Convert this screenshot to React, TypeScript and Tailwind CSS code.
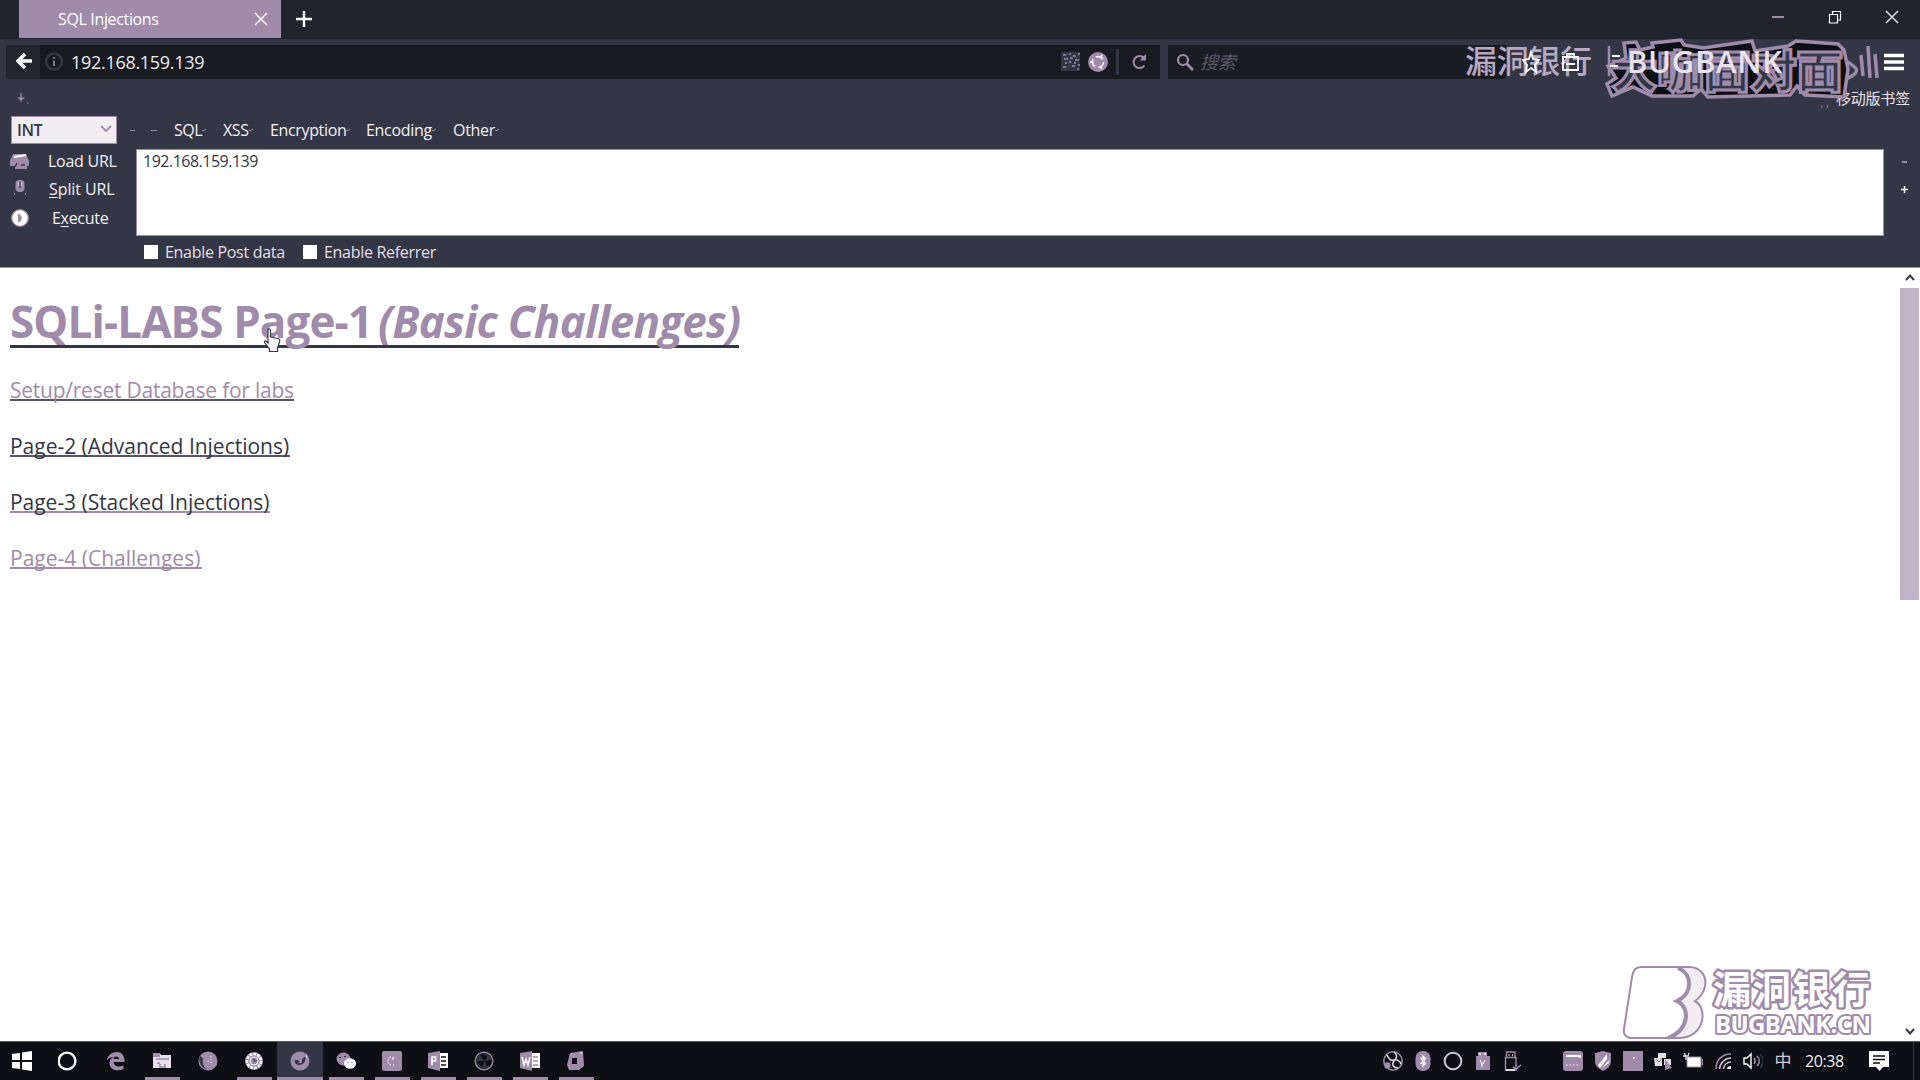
import React from "react";

const M = "#a08bab";
const S = "#333745";
const K = "#0d0f14";

type IconProps = { children: React.ReactNode; w?: number; h?: number };

function Icon({ children, w = 20, h = 20 }: IconProps) {
  return (
    <svg width={w} height={h} viewBox={`0 0 ${w} ${h}`} fill="none" className="block shrink-0">
      {children}
    </svg>
  );
}

function TabStrip() {
  return (
    <div className="flex h-[39px] shrink-0 bg-[#20242d]">
      <div className="ml-[19px] flex h-[38px] w-[262px] items-center justify-between bg-[#a08bab] pl-[39px] pr-[13px]">
        <span className="text-[16px] leading-[39px] tracking-[-0.35px] text-white">SQL Injections</span>
        <Icon w={14} h={14}>
          <path d="M1 1L13 13M13 1L1 13" stroke="#fff" strokeWidth="1.4" />
        </Icon>
      </div>
      <div className="ml-[14px] mt-[10px]">
        <Icon w={18} h={18}>
          <path d="M9 1V17M1 9H17" stroke="#fff" strokeWidth="2.4" />
        </Icon>
      </div>
      <div className="ml-auto flex gap-[43px] pr-[21px] pt-[10px]">
        <Icon w={14} h={14}>
          <path d="M1 7H13" stroke={M} strokeWidth="2" />
        </Icon>
        <Icon w={14} h={14}>
          <path d="M1.5 4.5H9.5V13H1.5ZM4.5 4V1.5H12.5V10H10" stroke="#fff" strokeWidth="1.2" />
        </Icon>
        <Icon w={14} h={14}>
          <path d="M1 1L13 13M13 1L1 13" stroke="#e4dce8" strokeWidth="1.5" />
        </Icon>
      </div>
    </div>
  );
}

function AddressRow() {
  return (
    <div className="mt-[6px] flex h-[34px] shrink-0">
      <div className="ml-[6px] flex w-[34px] items-center justify-end bg-[#22262f] pb-[2px] pr-[7px]">
        <Icon w={17} h={18}>
          <path d="M9 2L2 9L9 16M2 9H16" stroke="#fff" strokeWidth="3.6" />
        </Icon>
      </div>
      <div className="flex w-[1120px] items-center bg-[#171a20]">
        <div className="ml-[4px]">
          <Icon>
            <circle cx="10" cy="9.5" r="8" stroke={S} strokeWidth="2.4" />
            <path d="M10 8.5V14M10 5V7" stroke={M} strokeWidth="1.6" />
          </Icon>
        </div>
        <span className="ml-[7px] text-[18px] leading-[33px] tracking-[-0.3px] text-[#eee9f0]">192.168.159.139</span>
        <div className="ml-auto flex items-center pr-[12px]">
          <Icon>
            <rect width="19" height="19" fill={S} />
            <path
              d="M2 3H5M8 2H10M12 4H15M17 2H19M3 7H7M9 6H12M14 8H18M4 11H6M8 10H10M13 11H15M17 13H19M2 15H5M11 14H14M16 17H18"
              stroke={M}
              strokeWidth="1.4"
            />
          </Icon>
          <div className="ml-[7px]">
            <Icon>
              <circle cx="10" cy="10" r="10" fill={M} />
              <circle cx="10" cy="10" r="5.5" stroke="#fff" strokeWidth="1.5" strokeDasharray="8 3.5" />
              <path d="M2 10H4M14 2.8L13 4.6M14 17.2L13 15.4" stroke="#fff" strokeWidth="1.6" />
            </Icon>
          </div>
          <div className="ml-[8px] h-[26px] w-[3px] bg-[#333745]" />
          <div className="ml-[13px]">
            <Icon w={16} h={16}>
              <path d="M12.5 11.5A6 6 0 1 1 12 4" stroke={M} strokeWidth="2" />
              <path d="M14 0V6.5H7.5Z" fill={M} />
            </Icon>
          </div>
        </div>
      </div>
      <div className="ml-[8px] flex w-[338px] items-center bg-[#191c23]">
        <div className="ml-[8px]">
          <Icon w={18} h={18}>
            <circle cx="7" cy="7" r="5" stroke={M} strokeWidth="2.2" />
            <path d="M10.5 10.5L17 17" stroke={M} strokeWidth="2.6" />
          </Icon>
        </div>
        <span className="ml-[6px] text-[18px] italic text-[#5b5768]">搜索</span>
      </div>
      <div className="ml-auto mr-[16px] flex items-center">
        <Icon w={20} h={18}>
          <path d="M0 2.5H20M0 9H20M0 15.5H20" stroke="#fff" strokeWidth="3.4" />
        </Icon>
      </div>
    </div>
  );
}

function BookmarkRow() {
  return (
    <div className="flex h-[34px] shrink-0 items-start justify-between pl-[17px] pr-[10px] pt-[12px]">
      <Icon w={12} h={14}>
        <path d="M4 2V11M1.500 7H6.500L4 9Z" stroke={M} strokeWidth="1.2" fill={M} />
        <path d="M10 12H11.5" stroke={M} />
      </Icon>
      <div className="flex">
        <span className="mr-[7px] mt-[8px] text-[11px] leading-[8px] text-[#a08bab]">, ,</span>
        <span className="text-[15px] leading-[15px] tracking-[-0.2px] text-[#e9e3ec]">移动版书签</span>
      </div>
    </div>
  );
}

function Tick() {
  return (
    <Icon w={5} h={4}>
      <path d="M0 2.5H2L4 1" stroke={M} strokeWidth="1" />
    </Icon>
  );
}

const menus = [
  { label: "SQL", cls: "w-[49px] tracking-[-0.5px]" },
  { label: "XSS", cls: "w-[47px] tracking-[-0.4px]" },
  { label: "Encryption", cls: "w-[96px] tracking-[-0.35px]" },
  { label: "Encoding", cls: "w-[87px] tracking-[-0.3px]" },
  { label: "Other", cls: "w-[60px] tracking-[-0.3px]" },
];

function HackBar() {
  return (
    <div className="flex h-[154px] shrink-0 flex-col">
      <div className="flex h-[36px] pt-[3px]">
        <div className="ml-[11px] flex h-[28px] w-[106px] items-center justify-between border border-[#a08bab] bg-[#f1eef3] pl-[5px] pr-[4px]">
          <span className="text-[16px] font-semibold leading-[28px] tracking-[-0.4px] text-[#333745]">INT</span>
          <div className="pb-[3px]">
            <Icon w={12} h={8}>
              <path d="M1 1L6 6L11 1" stroke={M} strokeWidth="1.8" />
            </Icon>
          </div>
        </div>
        <div className="flex w-[57px] items-center gap-[16px] pb-[4px] pl-[13px]">
          <div className="h-px w-[5px] bg-[#a08bab]" />
          <div className="h-px w-[6px] bg-[#a08bab]" />
        </div>
        {menus.map((m) => (
          <div key={m.label} className={`flex h-[28px] items-center ${m.cls}`}>
            <span className="text-[16px] leading-[28px] text-[#f3eff5]">{m.label}</span>
            <Tick />
          </div>
        ))}
      </div>
      <div className="flex h-[87px]">
        <div className="flex w-[136px] shrink-0 flex-col">
          <div className="flex h-[24px] items-center pl-[10px]">
            <Icon w={20} h={17}>
              <path d="M3 1H16L19 8V13H17V16H5V13H0V8Z" fill={M} />
              <path d="M4 4L16 2" stroke="#fff" strokeWidth="2" />
              <path d="M7 10L5 14M11 12H15" stroke={S} strokeWidth="1.5" />
            </Icon>
            <span className="ml-[18px] text-[16px] leading-[24px] tracking-[-0.25px] text-[#f3eff5]">Load URL</span>
          </div>
          <div className="flex h-[30px] items-center pl-[13px] pt-[2px]">
            <div className="pb-[4px]">
              <Icon w={14} h={17}>
                <rect x="2.500" y="1" width="9" height="12" rx="4" fill={M} />
                <path d="M7 3V9" stroke={S} strokeWidth="1.200" />
                <path d="M5.500 3V7M8.500 3V7" stroke="#ddd3e2" strokeWidth="0.800" />
                <path d="M1.500 14V16M12.500 14V16" stroke={M} />
              </Icon>
            </div>
            <span className="ml-[22px] text-[16px] leading-[28px] tracking-[-0.1px] text-[#f3eff5]">
              <u className="underline-offset-2">S</u>plit URL
            </span>
          </div>
          <div className="flex h-[30px] items-center pl-[11px]">
            <Icon w={18} h={18}>
              <circle cx="9" cy="9" r="8.3" fill="#fff" stroke={M} strokeWidth="1.3" />
              <path d="M7 4.5C12 6 12 12 7 13.5Z" fill={M} />
            </Icon>
            <span className="ml-[23px] text-[16px] leading-[29px] tracking-[-0.3px] text-[#f3eff5]">
              E<u className="underline-offset-2">x</u>ecute
            </span>
          </div>
        </div>
        <div className="w-[1748px] shrink-0 border border-[#a08bab] bg-white pl-[6px]">
          <span className="block text-[16px] font-medium leading-[23px] tracking-[-0.5px] text-[#333745]">192.168.159.139</span>
        </div>
        <div className="flex w-[9px] flex-1 flex-col items-center pl-[4px] pt-[12px]">
          <div className="h-[2px] w-[5px] bg-[#a08bab]" />
          <div className="mt-[22px]">
            <Icon w={9} h={9}>
              <path d="M4.5 1V8M1 4.5H8" stroke="#fff" strokeWidth="1.5" />
            </Icon>
          </div>
        </div>
      </div>
      <div className="flex h-[31px] items-center pl-[144px]">
        <div className="h-[14px] w-[14px] bg-white" />
        <span className="ml-[7px] w-[138px] pt-px text-[16px] leading-[31px] tracking-[-0.3px] text-[#e6dfea]">Enable Post data</span>
        <div className="h-[14px] w-[14px] bg-white" />
        <span className="ml-[7px] pt-px text-[16px] leading-[31px] tracking-[-0.3px] text-[#e6dfea]">Enable Referrer</span>
      </div>
    </div>
  );
}

function PageBody() {
  return (
    <div className="flex min-h-0 flex-1 border-b border-t border-b-[#5d566b] border-t-[#a08bab] bg-white">
      <div className="flex flex-1 flex-col items-start pl-[10px] pt-[26px]">
        <h1 className="flex h-[54px] items-baseline whitespace-nowrap border-b-[3px] border-[#333745] text-[44px] font-bold leading-[55px] text-[#a08bab]">
          <span className="w-[368px] tracking-[-0.9px]">SQLi-LABS Page-1</span>
          <span className="w-[361px] italic tracking-[-0.75px]">(Basic Challenges)</span>
        </h1>
        <a className="mt-[28px] h-[25px] w-[284px] whitespace-nowrap border-b-2 border-[#5a5269] text-[21px] leading-[28px] tracking-[-0.24px] text-[#a08bab]">
          Setup/reset Database for labs
        </a>
        <a className="mt-[31px] h-[25px] w-[280px] whitespace-nowrap border-b-2 border-[#5a5269] text-[21px] leading-[28px] tracking-[-0.02px] text-[#333745]">
          Page-2 (Advanced Injections)
        </a>
        <a className="mt-[31px] h-[25px] w-[260px] whitespace-nowrap border-b-2 border-[#a08bab] text-[21px] leading-[28px] tracking-[-0.03px] text-[#333745]">
          Page-3 (Stacked Injections)
        </a>
        <a className="mt-[31px] h-[25px] w-[192px] whitespace-nowrap border-b-2 border-[#a08bab] text-[21px] leading-[28px] text-[#a08bab]">
          Page-4 (Challenges)
        </a>
      </div>
      <div className="flex w-[20px] flex-col pt-[5px]">
        <div className="flex h-[15px] justify-center pr-[1px]">
          <Icon w={10} h={8}>
            <path d="M1 7L5 2.5L9 7" stroke={S} strokeWidth="2" />
          </Icon>
        </div>
        <div className="h-[312px] w-[19px] bg-[#c1b3c8]" />
        <div className="mb-[5px] mt-auto flex justify-center pr-[1px]">
          <Icon w={10} h={8}>
            <path d="M1 1L5 5.5L9 1" stroke={S} strokeWidth="2" />
          </Icon>
        </div>
      </div>
    </div>
  );
}

const apps: { icon: React.ReactNode; state: "none" | "open" | "active" }[] = [
  { state: "none", icon: <circle cx="9" cy="10" r="8.4" stroke="#fff" strokeWidth="2.4" /> },
  {
    state: "none",
    icon: (
      <path d="M1 9C2 4 6 1 10.500 1C16 1 19 5 18.500 11H7.500C8 16 13 16.500 17.500 14.500V18C11 21 3 19 3.500 11C4 8 6 6.500 8 6C5 6 3 7 1 9ZM7.500 8H13C13 5 8 4.500 7.500 8Z" fill={M} fillRule="evenodd" />
    ),
  },
  {
    state: "open",
    icon: (
      <>
        <path d="M1 2H8L9 4H19V17H1Z" fill="#e8e0ec" />
        <path d="M4 8H17M5 12H8M8 13V16H13V13" stroke={M} strokeWidth="1.6" />
        <path d="M1 2H8V6H1Z" fill={M} />
      </>
    ),
  },
  {
    state: "none",
    icon: (
      <>
        <circle cx="10" cy="10" r="9.500" fill={M} />
        <path d="M2 5C0 11 3 17 9 19C5 15 4 11 5 7Z" fill={S} />
        <path d="M13 5V12M10 10V13" stroke="#fff" strokeDasharray="1 2" />
      </>
    ),
  },
  {
    state: "open",
    icon: (
      <>
        <circle cx="10" cy="10" r="9" fill={M} />
        <circle cx="10" cy="10" r="7" stroke="#fff" strokeWidth="2.600" strokeDasharray="3 1" />
        <circle cx="10" cy="10" r="4" fill={M} stroke="#fff" />
        <path d="M10 7V10H13" stroke={S} />
      </>
    ),
  },
  {
    state: "active",
    icon: (
      <>
        <circle cx="10" cy="10" r="9.500" fill={M} />
        <path d="M4.500 9H8L10 11L14 6H15.500C16 11 13 14 9 14C6 14 4.500 12 4.500 9Z" fill={S} />
        <path d="M8 12L12 8V12Z" fill={M} />
        <path d="M16.500 4V7" stroke="#ddd3e2" />
      </>
    ),
  },
  {
    state: "open",
    icon: (
      <>
        <ellipse cx="7.500" cy="8" rx="7" ry="6.500" fill={M} />
        <path d="M4 6V7M9 5V6" stroke={K} strokeWidth="1.600" />
        <ellipse cx="14" cy="12.500" rx="6" ry="5.200" fill="#fff" />
        <path d="M12 11V12.500M16 11V12.500" stroke={M} strokeWidth="1.400" />
      </>
    ),
  },
  {
    state: "open",
    icon: (
      <>
        <rect width="20" height="20" rx="2" fill={M} />
        <path d="M9 6C5 7 5 13 9 14M11 14H12M11 6V8M10 8H13" stroke="#fff" strokeWidth="1" strokeDasharray="2 1" />
      </>
    ),
  },
  {
    state: "open",
    icon: (
      <>
        <path d="M11 2H20V17H11Z" fill="#fff" />
        <path d="M13 6H18M13 10H18M13 14H18" stroke={K} strokeWidth="1.500" />
        <path d="M0 2L12 0V20L0 17Z" fill={M} />
        <path d="M4 14V6H7.500V10H4" stroke="#fff" strokeWidth="1.600" />
      </>
    ),
  },
  {
    state: "open",
    icon: (
      <>
        <circle cx="10" cy="10" r="8.800" stroke={M} strokeWidth="1.400" />
        <circle cx="10" cy="10" r="7.500" fill={S} />
        <path d="M10 10L6 4C9 2 13 4 13 7ZM10 10L4 10C3 13 6 16 9 15ZM11 10L17 9C18 13 15 16 12 15Z" fill={K} />
      </>
    ),
  },
  {
    state: "open",
    icon: (
      <>
        <path d="M11 2H20V17H11Z" fill="#fff" />
        <path d="M13 6H18M13 10H18M13 14H18" stroke={M} strokeWidth="1.500" />
        <path d="M0 2L12 0V20L0 17Z" fill={M} />
        <path d="M2 6L4 14L6 8L8 14L10 6" stroke="#fff" strokeWidth="1.500" />
      </>
    ),
  },
  {
    state: "open",
    icon: (
      <>
        <path d="M4 2L17 0L18 15L13 19H3L1 14Z" fill={M} />
        <path d="M6 7H11V13H6Z" fill={K} />
        <path d="M5 3H6M14 2H16" stroke="#fff" />
      </>
    ),
  },
];

const tray: React.ReactNode[] = [
  <>
    <circle cx="10" cy="10" r="9.200" stroke={M} strokeWidth="1.600" />
    <path d="M4 4C6 9 9 10 11 9C15 8 17 11 18 13M11 1C15 4 14 7 11 10C8 14 11 17 15 17" stroke="#e4dce8" strokeWidth="1.500" />
    <circle cx="4.500" cy="14.500" r="3.200" fill={M} />
  </>,
  <>
    <rect x="2.500" width="15" height="20" rx="7" fill={M} />
    <path d="M7.500 6.500L12.500 12.500L10 15V5L12.500 7.500L7.500 13" stroke="#fff" strokeWidth="1.200" />
  </>,
  <circle cx="10" cy="10" r="8.300" stroke="#cfc3d5" strokeWidth="2" />,
  <>
    <path d="M5 1H14V5H17V19H3V5H5Z" fill={M} />
    <path d="M7 2V4M12 2V4" stroke="#fff" strokeWidth="1.400" />
    <path d="M7 9L9 14M12 9L10 13M9 12V16" stroke="#fff" strokeWidth="1" />
  </>,
  <>
    <path d="M2.500 6.500H13V19H2.500ZM3.500 6V1H12V6" stroke={M} strokeWidth="1.400" />
    <path d="M3 19H12M5.500 4H6.500M9 4H10" stroke="#fff" strokeWidth="1.400" />
    <path d="M10 16L13 18L18 14" stroke={M} strokeWidth="1.600" />
  </>,
  null,
  <>
    <rect width="20" height="20" rx="3" fill={M} />
    <path d="M3 5H17V7" stroke="#fff" strokeWidth="2" />
    <path d="M3 14H17" stroke="#fff" strokeWidth="1.200" strokeDasharray="1.500 2" />
  </>,
  <>
    <path d="M2 2L10 0L18 2V10C18 15 14 18 10 20C6 18 2 15 2 10Z" fill={M} />
    <path d="M5 14L14 3V8L7 17ZM9 17L16 9V12Z" fill="#fff" />
  </>,
  <>
    <rect width="20" height="20" fill={M} />
    <path d="M10 7H12" stroke="#fff" strokeWidth="1.500" />
  </>,
  <>
    <path d="M5 2H13V7H5ZM1 7H9V15H2ZM11 8H18V14H11Z" fill="#e6dfea" />
    <path d="M12 8L19 17L12 19Z" fill={M} />
    <path d="M3 8L6 11L9 7" stroke={M} />
  </>,
  <>
    <path d="M4 6H18V16H4Z" fill="#fff" stroke={M} />
    <path d="M19.500 8V14" stroke={M} strokeWidth="1.400" />
    <path d="M0 5H5L6 2M1 2L3 5V9" stroke="#e4dce8" strokeWidth="1.300" />
  </>,
  <>
    <path d="M3 18C3 9 9 3 18 3" stroke={M} strokeWidth="1.500" />
    <path d="M6.500 18C7 12 12 7 18 7M10.500 18C11 14 14 11 18 11" stroke="#cfc3d5" strokeWidth="1.600" />
    <path d="M14 18C14 16 16 15 18 15V18Z" fill="#fff" />
  </>,
  <>
    <path d="M1 7H4L8 3V17L4 13H1Z" stroke="#fff" strokeWidth="1.400" />
    <path d="M11 7C12.500 9 12.500 11 11 13M14 5C17 8 17 12 14 15" stroke={M} strokeWidth="1.600" />
    <path d="M17 3C21 7 21 13 17 17" stroke={S} strokeWidth="1.400" />
  </>,
];

function Taskbar() {
  return (
    <div className="flex h-[38px] shrink-0 bg-[#0d0f14]">
      <div className="flex w-[47px] items-center pl-[11px]">
        <Icon w={22} h={20}>
          <path d="M1 3L9 2V9H1ZM11 1.500L21 0V9H11ZM1 11H9V18L1 17ZM11 11H21V20L11 18.500Z" fill="#fff" />
        </Icon>
      </div>
      {apps.map((a, i) => (
        <div
          key={i}
          className={
            a.state === "active"
              ? "flex w-[46px] flex-col items-center bg-[#333745] pt-[9px]"
              : i === 0
                ? "flex w-[46px] flex-col items-center pr-[4px] pt-[9px]"
                : "flex w-[46px] flex-col items-center pt-[9px]"
          }
        >
          <Icon>{a.icon}</Icon>
          {a.state === "open" && <div className="mt-auto h-[3px] w-[35px] bg-[#a08bab]" />}
          {a.state === "active" && <div className="mt-auto h-[3px] w-[46px] bg-[#a08bab]" />}
        </div>
      ))}
      <div className="ml-auto flex">
        {tray.map((t, i) => (
          <div key={i} className="flex w-[30px] justify-center pt-[9px]">
            {t && <Icon>{t}</Icon>}
          </div>
        ))}
        <span className="w-[30px] text-center text-[17px] leading-[37px] text-[#d5cbdb]">中</span>
        <span className="ml-[7px] w-[64px] text-[16px] leading-[39px] tracking-[-0.4px] text-[#f3eff5]">20:38</span>
        <div className="w-[44px] pt-[9px]">
          <Icon w={20} h={20}>
            <path d="M0 0H20V16H14L10.500 20L7 16H0Z" fill="#fff" />
            <path d="M4 5H16M4 8.500H16M4 12H11" stroke={K} strokeWidth="1.400" />
          </Icon>
        </div>
        <div className="mr-[6px] w-px bg-[#333745]" />
      </div>
    </div>
  );
}

function StreamBadge() {
  return (
    <svg width="460" height="64" viewBox="1460 38 460 64" fill="none" className="absolute left-[1460px] top-[38px]">
      <path
        d="M1608 66L1626 58L1624 43L1636 42L1640 50L1653 47L1652 43L1681 40L1684 45L1703 48L1752 41L1755 51L1788 46L1796 41L1838 44L1844 50L1848 69L1844 97L1805 95L1797 86L1790 95L1708 97L1701 89L1693 96L1652 96L1633 87L1612 96L1607 84L1616 78L1608 66Z"
        fill={K}
        stroke={M}
        strokeWidth="3.500"
      />
      <text x="1611" y="88" textLength="232" lengthAdjust="spacingAndGlyphs" fontFamily="Noto Sans CJK SC" fontWeight="900" fontSize="44" fill={S} stroke={M} strokeWidth="3">
        大咖面对面
      </text>
      <path d="M1846 61C1858 68 1862 72 1846 79M1861 55L1863 76M1868 46L1870 78M1875 54L1877 78" stroke={M} strokeWidth="3.500" />
      <text x="1465" y="73" textLength="127" fontFamily="Noto Sans CJK SC" fontWeight="500" fontSize="32" fill="#b8a8c1">
        漏洞银行
      </text>
      <path d="M1609 46V76" stroke={M} strokeWidth="2.500" />
      <path d="M1612 56H1620M1610 66H1618" stroke="#fff" strokeWidth="2" />
      <text x="1627" y="73" textLength="155" fontFamily="Open Sans" fontWeight="600" fontSize="31" fill="#e9e2ed">
        BUGBANK
      </text>
      <path d="M1531 52L1533 59L1539 60L1535 65L1536 72L1531 68L1526 72L1527 65L1523 60L1529 59Z" stroke="#fff" strokeWidth="1.800" />
      <path d="M1563 57H1578V70H1563ZM1567 57V54H1574V57M1566 64H1575" stroke="#fff" strokeWidth="1.800" />
    </svg>
  );
}

function CornerLogo() {
  return (
    <svg width="260" height="80" viewBox="1620 962 260 80" fill="none" className="absolute left-[1620px] top-[962px]">
      <path
        d="M1641 967H1690C1708 968 1711 990 1695 1001C1708 1008 1705 1037 1680 1038H1632C1626 1038 1623 1034 1624 1029L1632 977C1633 970 1636 967 1641 967Z"
        fill="#fff"
      />
      <path
        d="M1678 967H1690C1708 968 1711 990 1695 1001C1708 1008 1705 1037 1680 1038H1670C1690 1028 1691 1010 1677 1001C1692 990 1692 974 1678 967Z"
        fill="#f1edf3"
      />
      <path
        d="M1641 967H1690C1708 968 1711 990 1695 1001C1708 1008 1705 1037 1680 1038H1632C1626 1038 1623 1034 1624 1029L1632 977C1633 970 1636 967 1641 967Z"
        stroke={M}
        strokeWidth="2"
      />
      <path d="M1678 968C1693 974 1693 994 1677 1001C1691 1008 1689 1030 1668 1038" stroke={M} strokeWidth="4" />
      <text x="1713" y="1003" textLength="157" fontFamily="Noto Sans CJK SC" fontWeight="700" fontSize="38" fill="#fff" stroke={M} strokeWidth="5" strokeLinejoin="round" paintOrder="stroke">
        漏洞银行
      </text>
      <text x="1715" y="1033" textLength="156" fontFamily="Open Sans" fontWeight="700" fontSize="24" fill="#fff" stroke={M} strokeWidth="4" strokeLinejoin="round" paintOrder="stroke">
        BUGBANK.CN
      </text>
    </svg>
  );
}

function Pointer() {
  return (
    <svg width="18" height="26" viewBox="0 0 18 26" className="absolute left-[263px] top-[328px]">
      <path d="M5 1.500C6 .500 7.500 1 7.500 2.500V9L15 10.500C17 11 17 12.500 16.500 14L14.500 20V23.500H6.500V21L1.500 14.500C1 13 2.500 12.500 3.500 13.500L5 15Z" fill="#fff" stroke={S} strokeWidth="1.200" />
    </svg>
  );
}

export default function App() {
  return (
    <div className="relative flex h-[1080px] w-[1920px] flex-col overflow-hidden whitespace-nowrap bg-[#333745] font-['Open_Sans','Noto_Sans_CJK_SC',sans-serif]">
      <TabStrip />
      <AddressRow />
      <BookmarkRow />
      <HackBar />
      <PageBody />
      <Taskbar />
      <StreamBadge />
      <CornerLogo />
      <Pointer />
    </div>
  );
}
